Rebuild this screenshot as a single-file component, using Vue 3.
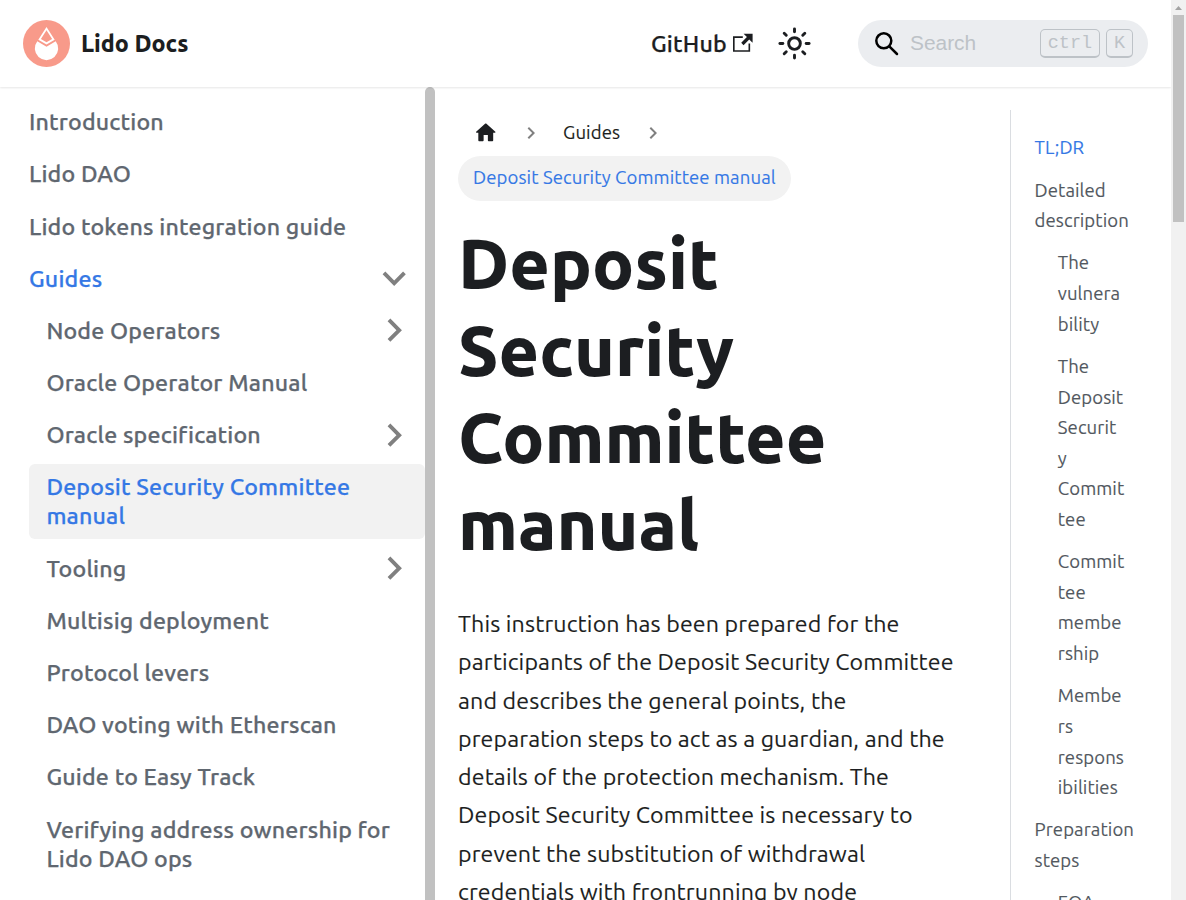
<script setup>
const menu = [
  { lines: ['Introduction'] },
  { lines: ['Lido DAO'] },
  { lines: ['Lido tokens integration guide'] },
  { lines: ['Guides'], active: true, caret: 'down' },
  { lines: ['Node Operators'], sub: true, caret: 'right' },
  { lines: ['Oracle Operator Manual'], sub: true },
  { lines: ['Oracle specification'], sub: true, caret: 'right' },
  { lines: ['Deposit Security Committee', 'manual'], sub: true, active: true, current: true },
  { lines: ['Tooling'], sub: true, caret: 'right' },
  { lines: ['Multisig deployment'], sub: true },
  { lines: ['Protocol levers'], sub: true },
  { lines: ['DAO voting with Etherscan'], sub: true },
  { lines: ['Guide to Easy Track'], sub: true },
  { lines: ['Verifying address ownership for', 'Lido DAO ops'], sub: true },
]
const title = ['Deposit', 'Security', 'Committee', 'manual']
const intro = [
  'This instruction has been prepared for the',
  'participants of the Deposit Security Committee',
  'and describes the general points, the',
  'preparation steps to act as a guardian, and the',
  'details of the protection mechanism. The',
  'Deposit Security Committee is necessary to',
  'prevent the substitution of withdrawal',
  'credentials with frontrunning by node',
]
const toc = [
  { lines: ['TL;DR'], active: true },
  { lines: ['Detailed', 'description'] },
  { lines: ['The', 'vulnera', 'bility'], sub: true },
  { lines: ['The', 'Deposit', 'Securit', 'y', 'Commit', 'tee'], sub: true },
  { lines: ['Commit', 'tee', 'membe', 'rship'], sub: true },
  { lines: ['Membe', 'rs', 'respons', 'ibilities'], sub: true },
  { lines: ['Preparation', 'steps'] },
  { lines: ['EOA'], sub: true },
]
const rays = [0, 45, 90, 135, 180, 225, 270, 315]
</script>

<template>
  <div class="shell">
    <div class="page">
      <header class="navbar">
        <svg class="logo" viewBox="0 0 47 47">
          <circle cx="23.5" cy="23.5" r="23.5" fill="#f89a8a" />
          <path d="M14.300 21.200 23.500 26.700 32.700 21.200A11.700 11.700 0 1 1 14.300 21.200z" fill="#fff" />
          <path fill-rule="evenodd" d="M23.500 7 31.700 19.700 23.500 24.500 15.300 19.700zM23.500 10.200 17.900 19.100 23.500 22.300 29.100 19.100z" fill="#fff" />
        </svg>
        <b class="brand">Lido Docs</b>
        <a class="github">GitHub</a>
        <svg class="external" viewBox="0 0 24 24"><path d="M21 13v10h-21v-19h12v2h-10v15h17v-8h2zm3-12h-10.988l4.035 4-6.977 7.070 2.828 2.828 6.977-7.070 4.125 4.172v-11z" /></svg>
        <svg class="sun" viewBox="0 0 24 24">
          <circle cx="12" cy="12" r="4" />
          <path v-for="r in rays" :key="r" d="M12 2v2" :transform="`rotate(${r} 12 12)`" />
        </svg>
        <div class="search">
          <svg class="lens" viewBox="0 0 24 24"><circle cx="8.800" cy="8.800" r="7.500" /><path d="M14.300 14.300 22 22" /></svg>
          <span class="placeholder">Search</span>
          <kbd class="ctrl">ctrl</kbd>
          <kbd class="key">K</kbd>
        </div>
      </header>

      <div class="columns">
        <nav class="sidebar">
          <a v-for="item in menu" :key="item.lines[0]" class="item" :class="{ sub: item.sub, active: item.active, current: item.current }">
            <span class="label"><span v-for="l in item.lines" :key="l" class="line">{{ l }}</span></span>
            <svg v-if="item.caret" class="caret" :class="item.caret" viewBox="0 0 24 24"><path d="M7.410 15.410L12 10.830l4.590 4.580L18 14l-6-6-6 6z" /></svg>
          </a>
        </nav>
        <div class="side-thumb"></div>

        <main class="doc">
          <div class="crumbs">
            <svg class="home" viewBox="0 0 24 24"><path d="M10 19v-5h4v5c0 .55.45 1 1 1h3c.55 0 1-.45 1-1v-7h1.700c.46 0 .68-.57.33-.87L12.670 3.600c-.38-.34-.96-.34-1.340 0l-8.360 7.530c-.34.3-.13.87.33.87H5v7c0 .55.45 1 1 1h3c.55 0 1-.45 1-1z" /></svg>
            <svg class="sep" viewBox="0 0 24 24"><path d="M7.410 15.410L12 10.830l4.590 4.580L18 14l-6-6-6 6z" /></svg>
            <span class="crumb">Guides</span>
            <svg class="sep" viewBox="0 0 24 24"><path d="M7.410 15.410L12 10.830l4.590 4.580L18 14l-6-6-6 6z" /></svg>
          </div>
          <div class="pill">Deposit Security Committee manual</div>
          <h1><span v-for="l in title" :key="l" class="line">{{ l }}</span></h1>
          <p><span v-for="l in intro" :key="l" class="line">{{ l }}</span></p>
        </main>

        <aside class="toc">
          <a v-for="(t, i) in toc" :key="i" class="entry" :class="{ sub: t.sub, active: t.active }">
            <span v-for="l in t.lines" :key="l" class="line">{{ l }}</span>
          </a>
        </aside>
      </div>
    </div>
    <div class="scrollbar">
      <svg class="up" viewBox="0 0 15 15"><path d="M4 10h7L7.500 6z" /></svg>
      <div class="thumb"></div>
    </div>
  </div>
</template>

<style>
body { overflow: hidden; }
</style>

<style scoped>
.shell { display: flex; width: 1186px; height: 900px; overflow: hidden; background: #fff; color: #1c1e21; font-family: Ubuntu, "Noto Sans", sans-serif; }
.shell * { box-sizing: border-box; }
.page { width: 1171px; height: 900px; overflow: hidden; }
.line { display: block; white-space: nowrap; }
svg { display: block; flex: none; }
.navbar { position: relative; display: flex; align-items: center; height: 87px; padding-left: 23px; background: #fff; box-shadow: 0 1px 2px rgba(0, 0, 0, .1); }
.logo { width: 47px; height: 47px; }
.brand { width: 570px; margin-left: 11px; font-size: 23.200px; font-weight: 800; line-height: 28px; padding-bottom: 1px; white-space: nowrap; }
.github { width: 76px; font-size: 23.200px; font-weight: 500; letter-spacing: .2px; -webkit-text-stroke: .25px; line-height: 28px; padding-bottom: 1px; }
.external { width: 19.600px; height: 19.600px; margin: 0 0 1px 6.400px; fill: #1c1e21; }
.sun { width: 35px; height: 35px; margin-left: 24px; fill: none; stroke: #1c1e21; stroke-width: 2; stroke-linecap: round; }
.search { display: flex; align-items: center; width: 290px; height: 47px; margin-left: 46px; padding-left: 17px; border-radius: 24px; background: #ebedf0; font-family: "Liberation Sans", sans-serif; color: #bdc2c7; }
.lens { width: 24px; height: 24px; fill: none; stroke: #000; stroke-width: 2.500; stroke-linecap: round; }
.placeholder { width: 130px; margin: 0 0 1px 11px; font-size: 20.880px; }
kbd { height: 29px; border: 1px solid #bdc2c7; border-bottom-width: 2px; border-radius: 5px; font: 18.500px/27px "Liberation Mono", monospace; text-align: center; }
.ctrl { width: 60px; }
.key { width: 27px; margin-left: 6px; }
.columns { display: flex; height: 813px; }
.sidebar { display: flex; flex: none; flex-direction: column; gap: 5.800px; width: 425px; padding: 11.600px 0 0 11.600px; }
.item { display: flex; flex: none; align-items: center; justify-content: space-between; padding: 8.700px 0 8.700px 17.400px; border-radius: 5.800px; color: #606770; font-size: 23.200px; font-weight: 500; letter-spacing: .18px; -webkit-text-stroke: .25px; line-height: 29px; }
.item.sub { margin-left: 17.400px; }
.item.active { color: #3578e5; }
.current { background: #f2f2f2; }
.caret { width: 46.400px; height: 46.400px; margin: -9px 8px -9px 0; fill: #808080; }
.caret path { stroke: none; }
.caret.down { transform: rotate(180deg); }
.caret.right { transform: rotate(90deg); }
.side-thumb { flex: none; width: 10px; border-radius: 5px 5px 0 0; background: #c1c1c1; }
.doc { flex: none; width: 575px; padding: 23px 0 0 23px; }
.crumbs { display: flex; align-items: center; height: 45px; margin-bottom: 1px; padding-left: 15px; font-size: 18.560px; letter-spacing: .1px; }
.home { width: 25.500px; height: 25.500px; fill: #1c1e21; }
.sep { width: 24px; height: 24px; margin-left: 20px; fill: #808080; transform: rotate(90deg); }
.crumb { width: 57px; margin: 0 1px 1px 20.500px; white-space: nowrap; }
.pill { width: 333px; height: 45px; padding-left: 15px; border-radius: 23px; background: #f2f2f2; color: #3578e5; font-size: 18.560px; letter-spacing: .1px; line-height: 43px; white-space: nowrap; }
h1 { margin: 19px 0 36px; font-size: 69.600px; line-height: 87px; font-weight: 800; }
p { margin: 0; font-size: 23.200px; letter-spacing: .135px; line-height: 38.280px; }
.pill, .crumb, p, .toc { -webkit-text-stroke: .12px; }
.toc { flex: none; width: 160px; height: 790px; margin-top: 23px; padding: 11.750px 0 0 23.600px; border-left: 1px solid #dadde1; font-size: 18.560px; letter-spacing: .08px; line-height: 30.620px; color: #525860; }
.entry { display: block; margin-top: 11.600px; }
.entry.sub { margin-left: 23.200px; }
.entry.active { color: #3578e5; }
.scrollbar { width: 15px; height: 900px; background: #f1f1f1; }
.up { width: 15px; height: 15px; fill: #a3a3a3; }
.thumb { width: 11px; height: 207px; margin-left: 2px; background: #c1c1c1; }
</style>
